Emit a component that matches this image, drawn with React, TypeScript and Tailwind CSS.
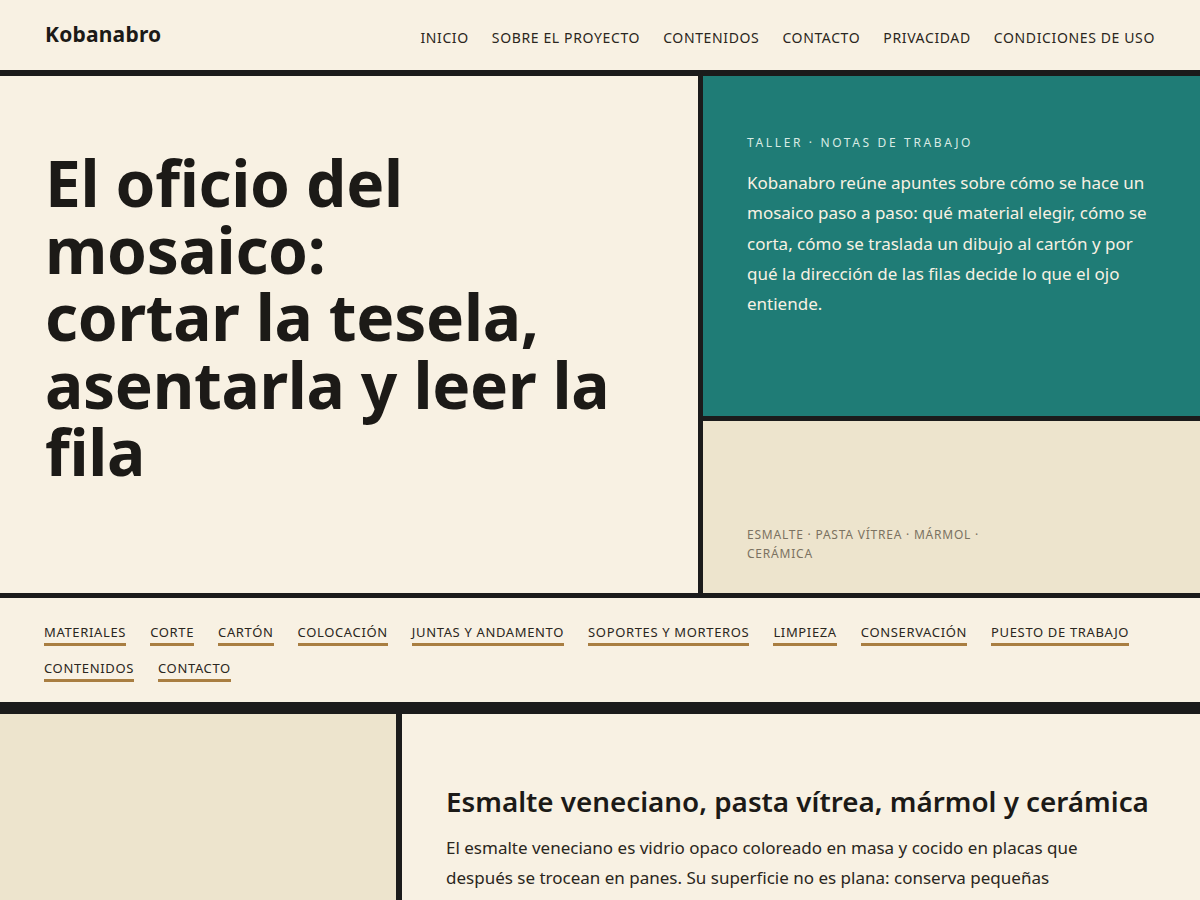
const NAV = [
  "Inicio",
  "Sobre el proyecto",
  "Contenidos",
  "Contacto",
  "Privacidad",
  "Condiciones de uso",
];

const TOPICS = [
  "Materiales",
  "Corte",
  "Cartón",
  "Colocación",
  "Juntas y andamento",
  "Soportes y morteros",
  "Limpieza",
  "Conservación",
  "Puesto de trabajo",
  "Contenidos",
  "Contacto",
];

export default function App() {
  return (
    <div
      className="min-h-screen bg-[#f8f1e3] text-[#1c1a17]"
      style={{ fontFamily: '"Noto Sans", "Open Sans", sans-serif' }}
    >
      <header className="flex h-[76px] items-center justify-between border-b-[6px] border-[#1b1b1b] px-[45px]">
        <a href="#" className="text-[21px] font-bold tracking-[0.01em] text-[#1c1a17]">
          Kobanabro
        </a>
        <nav className="flex items-center gap-[23px] pt-[5px]">
          {NAV.map((item) => (
            <a
              key={item}
              href="#"
              className="text-[14px] uppercase tracking-[0.045em] text-[#2a2620]"
            >
              {item}
            </a>
          ))}
        </nav>
      </header>

      <section className="flex h-[522px] border-b-[5px] border-[#1b1b1b]">
        <div className="w-[703px] shrink-0 border-r-[5px] border-[#1b1b1b] px-[45px] pt-[73px]">
          <h1 className="text-[64px] font-bold leading-[1.05] tracking-[-0.005em] text-[#1c1a17]">
            El oficio del mosaico:
            <br />
            cortar la tesela, asentarla y leer la fila
          </h1>
        </div>
        <div className="flex flex-1 flex-col">
          <div className="h-[345px] border-b-[5px] border-[#1b1b1b] bg-[#1f7c76] px-[44px] pt-[58px]">
            <p className="mb-[16px] text-[12px] uppercase leading-[18px] tracking-[0.22em] text-[#d9ebe4]">
              Taller · Notas de trabajo
            </p>
            <p className="text-[17px] leading-[30.3px] text-[#f8f1e3]">
              Kobanabro reúne apuntes sobre cómo se hace un mosaico paso a
              paso: qué material elegir, cómo se corta, cómo se traslada un
              dibujo al cartón y por qué la dirección de las filas decide lo
              que el ojo entiende.
            </p>
          </div>
          <div className="flex flex-1 items-end bg-[#ede4cd] px-[44px] pb-[30px]">
            <p className="max-w-[260px] text-[12px] uppercase leading-[19px] tracking-[0.065em] text-[#7b7261]">
              Esmalte · Pasta vítrea · Mármol · Cerámica
            </p>
          </div>
        </div>
      </section>

      <nav className="flex flex-wrap gap-x-6 gap-y-[12px] border-b-[12px] border-[#1b1b1b] px-[44px] pb-[20px] pt-[24px]">
        {TOPICS.map((topic, i) => (
          <a
            key={topic + i}
            href="#"
            className="border-b-[3px] border-[#a97e41] pb-[1px] text-[13px] uppercase leading-5 tracking-[0.05em] text-[#2a2620]"
          >
            {topic}
          </a>
        ))}
      </nav>

      <section className="flex">
        <div className="w-[402px] shrink-0 border-r-[6px] border-[#1b1b1b] bg-[#ede4cd]" />
        <article className="flex-1 px-[44px] pb-16 pt-[69px]">
          <h2 className="mb-[14px] text-[27.8px] font-semibold leading-[36px] text-[#1c1a17]">
            Esmalte veneciano, pasta vítrea, mármol y cerámica
          </h2>
          <p className="max-w-[665px] text-[17px] leading-[30px] text-[#2a2620]">
            El esmalte veneciano es vidrio opaco coloreado en masa y cocido en
            placas que después se trocean en panes. Su superficie no es plana:
            conserva pequeñas burbujas y ondulaciones que hacen vibrar la luz
            cuando la tesela se asienta con una ligera inclinación.
          </p>
        </article>
      </section>
    </div>
  );
}
